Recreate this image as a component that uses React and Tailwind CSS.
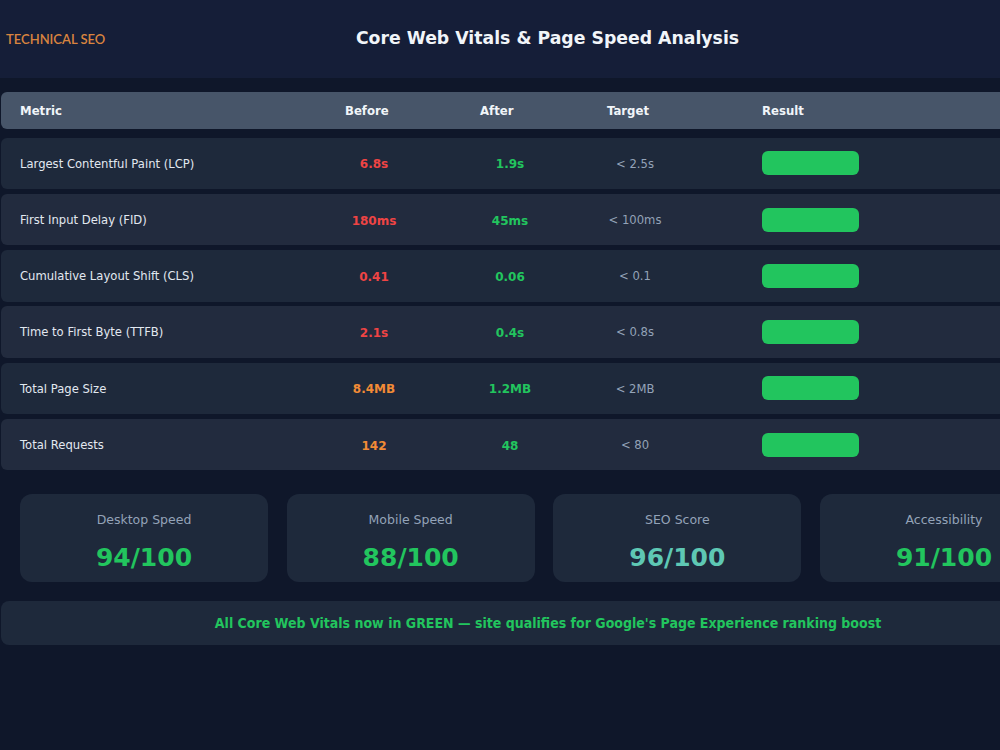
import React from "react";

const rows = [
  { name: "Largest Contentful Paint (LCP)", before: "6.8s", bc: "text-[#ef4444]", after: "1.9s", target: "< 2.5s" },
  { name: "First Input Delay (FID)", before: "180ms", bc: "text-[#ef4444]", after: "45ms", target: "< 100ms" },
  { name: "Cumulative Layout Shift (CLS)", before: "0.41", bc: "text-[#ef4444]", after: "0.06", target: "< 0.1" },
  { name: "Time to First Byte (TTFB)", before: "2.1s", bc: "text-[#ef4444]", after: "0.4s", target: "< 0.8s" },
  { name: "Total Page Size", before: "8.4MB", bc: "text-[#f28b36]", after: "1.2MB", target: "< 2MB" },
  { name: "Total Requests", before: "142", bc: "text-[#f28b36]", after: "48", target: "< 80" },
];

const cards = [
  { label: "Desktop Speed", value: "94/100", c: "text-[#22c55e]" },
  { label: "Mobile Speed", value: "88/100", c: "text-[#22c55e]" },
  { label: "SEO Score", value: "96/100", c: "text-[#5ec8b4]" },
  { label: "Accessibility", value: "91/100", c: "text-[#22c55e]" },
];

export default function App() {
  return (
    <div className="w-[1000px] h-[750px] overflow-hidden bg-[#0f172a] font-['DejaVu_Sans',sans-serif]">
      <div className="w-[1095px]">
        <div className="h-[78px] bg-[#151e38] grid grid-cols-[1fr_auto_1fr] items-center">
          <div className="pl-[6px] pt-[2px] text-[13px] text-[#d9843f] font-['Lato',sans-serif] font-semibold">TECHNICAL SEO</div>
          <div className="text-[17.3px] font-bold text-[#f1f5f9]">Core Web Vitals &amp; Page Speed Analysis</div>
          <div />
        </div>

        <div className="mt-[14px] pl-px flex flex-col">
          <div className="h-[37px] rounded-[6px] bg-[#475569] grid grid-cols-[325px_135px_127px_155px_1fr] items-center pl-[19px] pt-[3px] text-[11.7px] font-bold text-[#f1f5f9]">
            <div>Metric</div>
            <div>Before</div>
            <div>After</div>
            <div>Target</div>
            <div>Result</div>
          </div>
          <div className="mt-[8.5px] flex flex-col gap-[4.8px]">
            {rows.map((r, i) => (
              <div
                key={r.name}
                className={
                  "h-[51.5px] rounded-[6px] grid grid-cols-[325px_135px_127px_155px_1fr] items-center pl-[19px] " +
                  (i % 2 === 0 ? "bg-[#1e293b]" : "bg-[#222b3e]")
                }
              >
                <div className="pt-[2px] text-[11.6px] text-[#e2e8f0]">{r.name}</div>
                <div className={"pt-[2px] w-[58px] text-center text-[12px] font-bold " + r.bc}>{r.before}</div>
                <div className="pt-[2px] w-[60px] text-center text-[12px] font-bold text-[#22c55e]">{r.after}</div>
                <div className="pt-[2px] w-[56px] text-center text-[11.6px] text-[#94a3b8]">{r.target}</div>
                <div>
                  <div className="w-[97px] h-[24px] rounded-[6px] bg-[#22c55e]" />
                </div>
              </div>
            ))}
          </div>
        </div>

        <div className="mt-[24px] pl-[20px]">
          <div className="w-[1048px] grid grid-cols-4 gap-[18.67px]">
            {cards.map((c) => (
              <div key={c.label} className="h-[88px] rounded-[12px] bg-[#1e293b] flex flex-col items-center pt-[17px]">
                <div className="text-[12.5px] text-[#94a3b8] leading-[18px]">{c.label}</div>
                <div className={"mt-[14px] text-[25px] font-bold leading-[30px] " + c.c}>{c.value}</div>
              </div>
            ))}
          </div>
        </div>

        <div className="mt-[19px] ml-px h-[44px] rounded-[8px] bg-[#1e293b] flex items-center justify-center">
          <div className="text-[14px] font-bold text-[#22c55e] font-['DejaVu_Sans_Condensed','DejaVu_Sans',sans-serif]">
            All Core Web Vitals now in GREEN — site qualifies for Google's Page Experience ranking boost
          </div>
        </div>
      </div>
    </div>
  );
}
